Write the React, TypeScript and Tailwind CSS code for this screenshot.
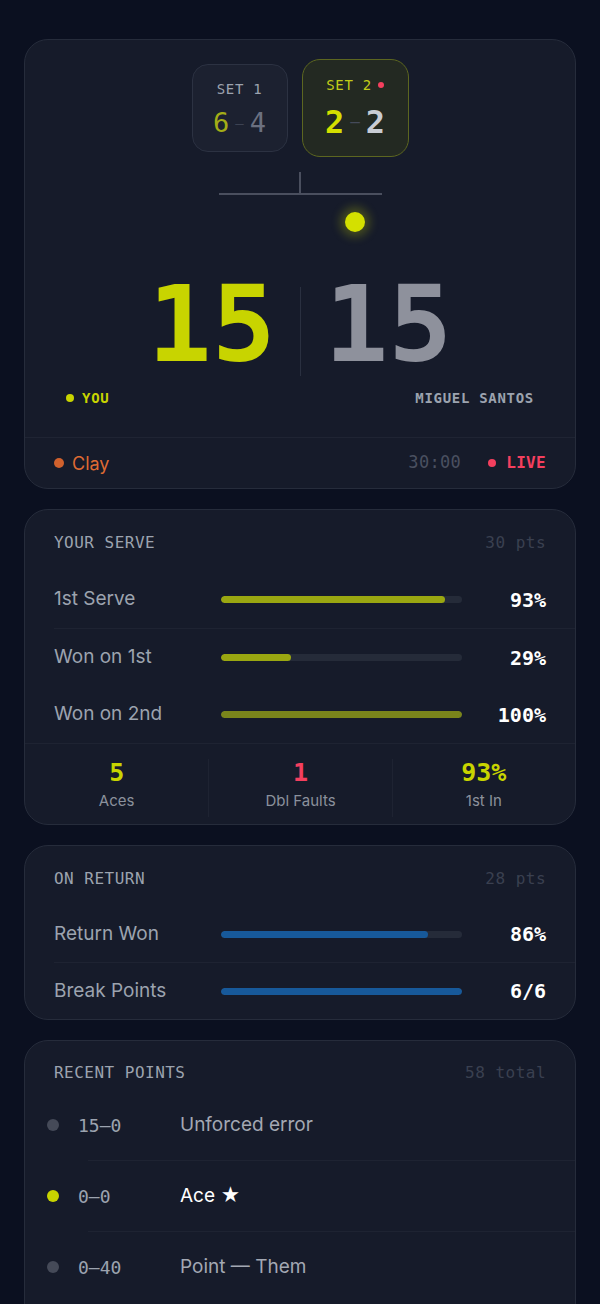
import React from 'react';

const MONO = "font-['DejaVu_Sans_Mono',monospace]";
const SANS = "font-['Inter',sans-serif]";

type BarRow = {
  label: string;
  pct: number;
  value: string;
  fill: string;
  divider?: boolean;
};

const serveRows: BarRow[] = [
  { label: '1st Serve', pct: 93, value: '93%', fill: 'bg-[#9aa711]', divider: true },
  { label: 'Won on 1st', pct: 29, value: '29%', fill: 'bg-[#9aa711]' },
  { label: 'Won on 2nd', pct: 100, value: '100%', fill: 'bg-[#7a851b]' },
];

const returnRows: BarRow[] = [
  { label: 'Return Won', pct: 86, value: '86%', fill: 'bg-[#17599a]', divider: true },
  { label: 'Break Points', pct: 100, value: '6/6', fill: 'bg-[#17599a]' },
];

const points = [
  { score: '15–0', text: 'Unforced error', won: false },
  { score: '0–0', text: 'Ace ★', won: true },
  { score: '0–40', text: 'Point — Them', won: false },
];

const CardHeader: React.FC<{ title: string; meta: string }> = ({ title, meta }) => (
  <div className="flex h-[20px] items-center justify-between pl-[29px] pr-[29px]">
    <span className={`${MONO} text-[16px] tracking-[0.03em] text-[#9ca3af]`}>{title}</span>
    <span className={`${MONO} text-[16px] tracking-[0.03em] text-[#3a4050]`}>{meta}</span>
  </div>
);

const StatBar: React.FC<{ row: BarRow; h: string }> = ({ row, h }) => (
  <>
    <div className={`flex ${h} items-center pl-[29px] pr-[29px]`}>
      <span className={`${SANS} w-[167px] text-[19px] text-[#9ca3af]`}>{row.label}</span>
      <div className="h-[7px] w-[241px] overflow-hidden rounded-full bg-[#252b39]">
        <div className={`h-full rounded-full ${row.fill}`} style={{ width: `${row.pct}%` }} />
      </div>
      <span className={`${MONO} ml-auto text-[20px] font-bold text-white`}>{row.value}</span>
    </div>
    {row.divider && <div className="ml-[29px] h-px bg-[#1e2332]" />}
  </>
);

const Card: React.FC<{ children: React.ReactNode }> = ({ children }) => (
  <section className="overflow-hidden rounded-[24px] border border-[#262c3b] bg-[#161b2a]">
    {children}
  </section>
);

const Scoreboard = () => (
  <Card>
    <div className="flex items-center justify-center gap-[14px] pt-[19px]">
      <div className="flex h-[88px] w-[96px] flex-col items-center rounded-[16px] border border-[#2c3242] bg-[#1c2130]">
        <span className={`${MONO} mt-[14px] text-[14px] leading-[20px] tracking-[0.05em] text-[#9ca3af]`}>SET 1</span>
        <div className={`${MONO} mt-[9px] flex items-center text-[27px] leading-[30px]`}>
          <span className="text-[#a3ad17]">6</span>
          <span className="mx-[6px] text-[14px] text-[#3c4252]">–</span>
          <span className="text-[#6b7080]">4</span>
        </div>
      </div>
      <div className="flex h-[98px] w-[107px] flex-col items-center rounded-[18px] border border-[#5c6620] bg-[#232922]">
        <div className="mt-[15px] flex items-center gap-[6px]">
          <span className={`${MONO} text-[14px] leading-[20px] tracking-[0.05em] text-[#c2cc18]`}>SET 2</span>
          <span className="h-[6px] w-[6px] rounded-full bg-[#f43f5e]" />
        </div>
        <div className={`${MONO} mt-[9px] flex items-center text-[32px] font-bold leading-[36px]`}>
          <span className="text-[#d4df00]">2</span>
          <span className="mx-[6px] text-[16px] font-normal text-[#454b5a]">–</span>
          <span className="text-[#c8ccd4]">2</span>
        </div>
      </div>
    </div>

    <div className="mx-auto mt-[15px] flex w-[163px] flex-col items-center">
      <div className="h-[21px] w-[2px] bg-[#4a4f5e]" />
      <div className="h-[2px] w-full bg-[#4a4f5e]" />
    </div>
    <div className="mx-auto mt-[17px] w-[163px]">
      <div className="ml-[126px] h-[20px] w-[20px] rounded-full bg-[#d4e000] shadow-[0_0_10px_5px_rgba(212,224,0,0.25)]" />
    </div>

    <div className="mt-[40px] flex items-start justify-center">
      <span className={`${MONO} text-[106px] font-bold leading-none text-[#c8d400]`}>15</span>
      <div className="mx-[24px] mt-[15px] h-[89px] w-px bg-[#2a3040]" />
      <span className={`${MONO} text-[106px] font-bold leading-none text-[#8e919c]`}>15</span>
    </div>

    <div className="mt-[10px] flex h-[20px] items-center justify-between pl-[41px] pr-[41px]">
      <div className="flex items-center gap-[8px]">
        <span className="h-[8px] w-[8px] rounded-full bg-[#c8d400]" />
        <span className={`${MONO} text-[14px] font-bold tracking-[0.05em] text-[#c8d400]`}>YOU</span>
      </div>
      <span className={`${MONO} text-[14px] font-bold tracking-[0.05em] text-[#9ca3af]`}>MIGUEL SANTOS</span>
    </div>

    <div className="mt-[29px] flex h-[51px] items-center border-t border-[#1f2433] pl-[29px] pr-[29px]">
      <span className="h-[10px] w-[10px] rounded-full bg-[#d0612d]" />
      <span className={`${SANS} ml-[8px] text-[18px] text-[#df6a33]`}>Clay</span>
      <span className={`${MONO} ml-auto text-[17px] tracking-[0.02em] text-[#4a5060]`}>30:00</span>
      <span className="ml-[27px] h-[8px] w-[8px] rounded-full bg-[#f43f5e]" />
      <span className={`${MONO} ml-[10px] text-[16px] font-bold tracking-[0.02em] text-[#f43f5e]`}>LIVE</span>
    </div>
  </Card>
);

const ServeCard = () => (
  <Card>
    <div className="pt-[23px]">
      <CardHeader title="YOUR SERVE" meta="30 pts" />
    </div>
    <div className="mt-[18px]">
      {serveRows.map((r) => (
        <StatBar key={r.label} row={r} h="h-[57px]" />
      ))}
    </div>
    <div className="grid grid-cols-3 border-t border-[#1e2332] pt-[15px] pb-[7px]">
      {[
        { v: '5', l: 'Aces', c: 'text-[#c8d400]' },
        { v: '1', l: 'Dbl Faults', c: 'text-[#f43f5e]' },
        { v: '93%', l: '1st In', c: 'text-[#c8d400]' },
      ].map((s, i) => (
        <div
          key={s.l}
          className={`flex flex-col items-center pb-[6px] ${i > 0 ? 'border-l border-[#1e2332]' : ''}`}
        >
          <span className={`${MONO} text-[25px] font-bold leading-[28px] ${s.c}`}>{s.v}</span>
          <span className={`${SANS} mt-[4px] text-[15px] leading-[20px] text-[#8b919c]`}>{s.l}</span>
        </div>
      ))}
    </div>
  </Card>
);

const ReturnCard = () => (
  <Card>
    <div className="pt-[23px]">
      <CardHeader title="ON RETURN" meta="28 pts" />
    </div>
    <div className="mt-[17px]">
      {returnRows.map((r) => (
        <StatBar key={r.label} row={r} h="h-[56px]" />
      ))}
    </div>
  </Card>
);

const RecentCard = () => (
  <Card>
    <div className="pt-[22px]">
      <CardHeader title="RECENT POINTS" meta="58 total" />
    </div>
    <div className="mt-[7px] pb-[40px]">
      {points.map((p, i) => (
        <div key={p.score + i}>
          {i > 0 && <div className="ml-[63px] h-px bg-[#1e2332]" />}
          <div className="flex h-[70px] items-center pl-[22px]">
            <span className={`h-[12px] w-[12px] rounded-full ${p.won ? 'bg-[#c8d400]' : 'bg-[#454a58]'}`} />
            <span className={`${MONO} ml-[19px] w-[102px] text-[18px] text-[#9ca3af]`}>{p.score}</span>
            <span className={`${SANS} text-[19px] ${p.won ? 'text-white' : 'text-[#a3a8b3]'}`}>{p.text}</span>
          </div>
        </div>
      ))}
    </div>
  </Card>
);

export default function App() {
  return (
    <div className="min-h-screen bg-[#0b1020] px-[24px] pt-[39px] pb-[40px]">
      <div className="flex flex-col gap-[20px]">
        <Scoreboard />
        <ServeCard />
        <ReturnCard />
        <RecentCard />
      </div>
    </div>
  );
}
